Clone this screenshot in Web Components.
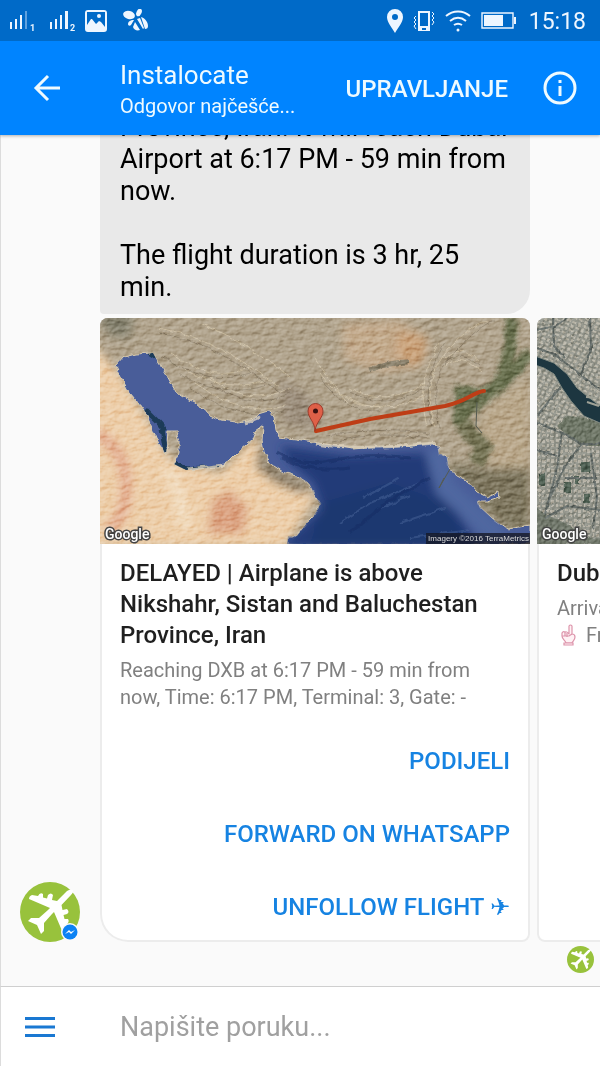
<!DOCTYPE html>
<html lang="hr">
<head>
<meta charset="utf-8">
<meta name="viewport" content="width=device-width, initial-scale=1">
<title>Instalocate</title>
<style>
  html, body { height: 100%; }
  body {
    margin: 0;
    font-family: Roboto, "Noto Sans", sans-serif;
    background: #fafafa;
  }
</style>
</head>
<body>

<chat-app>
  <status-bar slot="header" time="15:18"></status-bar>
  <chat-toolbar slot="header">
    <span slot="title">Instalocate</span>
    <span slot="subtitle">Odgovor najčešće...</span>
    <span slot="action">UPRAVLJANJE</span>
  </chat-toolbar>

  <chat-bubble>Province, Iran. It will reach Dubai Airport at 6:17 PM - 59 min from now.<br><br>The flight duration is 3 hr, 25 min.</chat-bubble>

  <card-carousel>
    <flight-card class="first">
      <route-map slot="media"></route-map>
      <span slot="title">DELAYED | Airplane is above Nikshahr, Sistan and Baluchestan Province, Iran</span>
      <span slot="subtitle">Reaching DXB at 6:17 PM - 59 min from now, Time: 6:17 PM, Terminal: 3, Gate: -</span>
      <card-action slot="actions">PODIJELI</card-action>
      <card-action slot="actions">FORWARD ON WHATSAPP</card-action>
      <card-action slot="actions">UNFOLLOW FLIGHT ✈</card-action>
    </flight-card>
    <flight-card>
      <city-map slot="media"></city-map>
      <span slot="title">Dubai</span>
      <span slot="subtitle">Arrival<br><hand-icon></hand-icon>From</span>
    </flight-card>
    <bot-avatar slot="avatar" badge></bot-avatar>
  </card-carousel>

  <seen-row></seen-row>

  <message-composer slot="footer" hint="Napišite poruku..."></message-composer>
</chat-app>

<template id="chat-app">
  <style>
    :host {
      display: flex;
      flex-direction: column;
      height: 100vh;
      overflow: hidden;
    }
    header { position: relative; z-index: 1; box-shadow: 0 1px 3px rgba(0, 0, 0, .3); }
    main {
      flex: 1;
      min-height: 0;
      overflow: hidden;
      display: flex;
      flex-direction: column;
      justify-content: flex-end;
      background: #fafafa;
      border-left: 1px solid #dcdcdc;
    }
  </style>
  <header><slot name="header"></slot></header>
  <main><slot></slot></main>
  <slot name="footer"></slot>
</template>

<template id="status-bar">
  <style>
    :host {
      display: flex;
      justify-content: space-between;
      align-items: center;
      height: 41px;
      padding: 0 14px 0 10px;
      background: #006ac8;
      color: #eef6ff;
    }
    div { display: flex; align-items: center; gap: 10px; }
    svg { display: block; fill: #eef6ff; }
    text { font-size: 9px; font-weight: 700; }
    time { font-size: 23px; line-height: 28px; padding-top: 2px; }
  </style>
  <div>
    <svg width="30" height="24" viewBox="0 0 30 24">
      <path d="M0 13h2v7H0zM5 10h2v10H5zM10 6h2v14h-2z"/>
      <path d="M15 2h2v18h-2z" opacity=".4"/>
      <text x="20" y="22">1</text>
    </svg>
    <svg width="25" height="24" viewBox="0 0 25 24">
      <path d="M0 13h2v7H0zM5 10h2v10H5zM10 6h2v14h-2zM15 2h3v18h-3z"/>
      <text x="20" y="22">2</text>
    </svg>
    <svg width="22" height="22" viewBox="0 0 22 22">
      <path fill-rule="evenodd" d="M3 0h16a3 3 0 0 1 3 3v16a3 3 0 0 1-3 3H3a3 3 0 0 1-3-3V3a3 3 0 0 1 3-3zM2 2v13l4-6 1 0 4 5 3-3 2 1 4 5V2z"/>
      <circle cx="14" cy="6" r="2"/>
    </svg>
    <svg width="34" height="24" viewBox="0 0 34 24">
      <ellipse cx="12" cy="6" rx="6" ry="4" transform="rotate(14 12 6)"/>
      <ellipse cx="22" cy="3.500" rx="2.500" ry="4" transform="rotate(25 22 3.500)"/>
      <path d="M17 11c-4 0-6 2-6 4s2 2 3 1l3-5z"/>
      <path d="M18 13l5 8c-3 1-6 0-7-3zM20 10l6 10 1-1-4-10zM24 8c4 1 7 5 7 9 0 2-1 3-3 3z"/>
    </svg>
  </div>
  <div>
    <svg width="16" height="24" viewBox="0 0 16 24">
      <path fill-rule="evenodd" d="M8 0a8 8 0 0 1 8 8c0 5-5 11-8 16C5 19 0 13 0 8a8 8 0 0 1 8-8zm0 5a3 3 0 1 0 0 6 3 3 0 0 0 0-6z"/>
    </svg>
    <svg width="22" height="22" viewBox="0 0 22 22">
      <path fill-rule="evenodd" d="M6 1h11v20H5V1zm1 2v13h8V3zm2 15v2h4v-2z"/>
      <path d="M3 6L1 8l2 2-2 2 2 2-2 2 2 3M19 2l2 2-2 2 2 2-2 2 2 2-2 3" fill="none" stroke="#eef6ff"/>
    </svg>
    <svg width="26" height="22" viewBox="0 0 26 22">
      <path d="M1 6c7-6 17-6 24 0M5 11c5-4 11-4 16 0M9 15c3-2 5-2 8 0" fill="none" stroke="#eef6ff" stroke-width="2"/>
      <circle cx="13" cy="20" r="1.5"/>
    </svg>
    <svg width="38" height="18" viewBox="0 0 38 18">
      <path d="M1 1h31v15H1z" fill="none" stroke="#eef6ff" stroke-width="1.4"/>
      <path d="M3 3h19v11H3zM33 5h2v7h-2z"/>
    </svg>
    <time></time>
  </div>
</template>

<template id="chat-toolbar">
  <style>
    :host {
      display: flex;
      align-items: center;
      height: 94px;
      padding: 0 22px 0 20px;
      background: #0084ff;
      color: #eefaff;
    }
    button {
      border: 0;
      padding: 0;
      background: none;
      color: inherit;
      font: 500 24px/32px Roboto, sans-serif;
      cursor: pointer;
    }
    svg { display: block; fill: none; stroke: currentColor; }
    .back { padding: 12px; }
    .names { flex: 1; min-width: 0; padding: 4px 0 0 46px; }
    h1 { margin: 0; font-size: 26px; line-height: 32px; font-weight: 400; }
    p { margin: 0; font-size: 20px; line-height: 30px; }
    .action { padding-top: 2px; }
    .info { margin-left: 34px; }
  </style>
  <button class="back" aria-label="Natrag">
    <svg width="30" height="30" viewBox="0 0 30 30" stroke-width="3"><path d="M28 15H4M16 3L4 15l12 12"/></svg>
  </button>
  <div class="names">
    <h1><slot name="title"></slot></h1>
    <p><slot name="subtitle"></slot></p>
  </div>
  <button class="action"><slot name="action"></slot></button>
  <button class="info" aria-label="Informacije">
    <svg width="36" height="36" viewBox="0 0 36 36" stroke-width="3">
      <circle cx="18" cy="18" r="15"/><path d="M18 16v10M18 10v3"/>
    </svg>
  </button>
</template>

<template id="chat-bubble">
  <style>
    :host {
      display: block;
      flex: none;
      margin: 0 70px 4px 99px;
      padding: 12px 20px 11px;
      border-radius: 24px 24px 24px 4px;
      background: #e9e9e9;
      color: #000;
      font-size: 27px;
      line-height: 32px;
    }
  </style>
  <slot></slot>
</template>

<template id="card-carousel">
  <style>
    :host {
      display: grid;
      grid-template-columns: 99px 1fr;
      flex: none;
      align-items: end;
    }
    .avatar { padding-left: 19px; }
    .track { display: flex; gap: 7px; overflow: hidden; }
    ::slotted(flight-card) { flex: 0 0 calc(100% - 70px); }
  </style>
  <div class="avatar"><slot name="avatar"></slot></div>
  <div class="track"><slot></slot></div>
</template>

<template id="flight-card">
  <style>
    :host {
      display: block;
      box-sizing: border-box;
      overflow: hidden;
      border-radius: 8px;
      background: #fff;
      box-shadow: inset 0 0 0 2px #ececec;
    }
    :host(.first) { border-bottom-left-radius: 28px; }
    .text { padding: 14px 20px 12px; }
    h2 { margin: 0 0 6px; color: #1f1f1f; font-size: 24px; line-height: 31px; font-weight: 500; }
    p { margin: 0; color: #808080; font-size: 20px; line-height: 27px; }
  </style>
  <slot name="media"></slot>
  <div class="text">
    <h2><slot name="title"></slot></h2>
    <p><slot name="subtitle"></slot></p>
  </div>
  <slot name="actions"></slot>
</template>

<template id="card-action">
  <style>
    :host { display: block; }
    button {
      display: block;
      width: 100%;
      border: 0;
      padding: 22px 20px 18px;
      background: none;
      color: #1683e2;
      font: 500 24px/33px Roboto, "DejaVu Sans", sans-serif;
      text-align: right;
      cursor: pointer;
    }
  </style>
  <button><slot></slot></button>
</template>

<template id="route-map">
  <style>
    :host { display: block; position: relative; }
    svg { display: block; width: 100%; height: auto; }
    .logo {
      font: 500 14px Roboto, sans-serif;
      fill: #fff;
      stroke: #444;
      stroke-width: 3px;
      paint-order: stroke;
    }
    small {
      position: absolute;
      right: 0;
      bottom: 0;
      padding: 0 1px 0 2px;
      background: rgba(20, 22, 32, .75);
      color: #ddd;
      font: 8px/11px "Liberation Sans", sans-serif;
    }
  </style>
  <svg viewBox="0 0 430 226" preserveAspectRatio="xMidYMid slice" role="img" aria-label="Google">
    <defs>
      <filter id="relief" x="0" y="0" width="100%" height="100%" color-interpolation-filters="sRGB">
        <feTurbulence type="fractalNoise" baseFrequency=".11 .19" numOctaves="4" seed="8"/>
        <feDiffuseLighting surfaceScale="2" diffuseConstant="1.05" lighting-color="#fff">
          <feDistantLight azimuth="225" elevation="38"/>
        </feDiffuseLighting>
      </filter>
      <filter id="rough" x="-5%" y="-5%" width="110%" height="110%">
        <feTurbulence type="fractalNoise" baseFrequency=".12" numOctaves="3" seed="2"/>
        <feDisplacementMap in="SourceGraphic" scale="5" xChannelSelector="R" yChannelSelector="G"/>
      </filter>
      <filter id="soft" x="-30%" y="-30%" width="160%" height="160%"><feGaussianBlur stdDeviation="5"/></filter>
      <filter id="soft2" x="-30%" y="-30%" width="160%" height="160%"><feGaussianBlur stdDeviation="2"/></filter>
      <clipPath id="sea">
        <path id="coast" d="M16 48L24 39 36 36 53 35 58 44 66 56 76 74 84 79 96 85 109 96 121 102 136 104 149 102 159 96 169 93 174 99 176 111 179 119 196 121 213 124 243 129 253 131 277 129 310 128 333 125 338 128 339 136 347 139 349 151 357 158 367 163 377 174 387 179 398 174 399 179 387 183 378 183 380 189 393 201 407 211 430 207V226H187L188 218 196 219 206 206 213 199 220 186 215 178 209 166 196 158 183 154 171 146 164 134 162 123 163 108 156 113 153 121 139 133 128 144 119 149 103 150 86 152 74 146 79 136 79 123 76 113 68 113 66 136 59 126 54 114 48 99 39 86 29 74 21 59Z"/>
      </clipPath>
    </defs>
    <rect width="430" height="226" fill="#aa9c84"/>
    <g filter="url(#soft)">
      <path d="M-10 24L20 55 50 105 70 140 120 155 155 118 166 140 200 165 215 180 185 230H-10z" fill="#ebcaa3"/>
      <path d="M112 182L130 172 148 190 143 216H108z" fill="#d89b78"/>
      <path d="M-5 115Q25 130 26 165T8 212" fill="none" stroke="#dfa385" stroke-width="11"/>
      <path d="M68 150Q82 180 85 210" fill="none" stroke="#f2ddbf" stroke-width="10"/>
      <path d="M242 6L300 2 330 24 320 48 285 55 244 42z" fill="#bda383"/>
      <path d="M298 14L325 16 326 38 314 50 296 36z" fill="#c49a70"/>
      <path d="M385 90L430 58V150L395 155 375 125z" fill="#b3a082"/>
      <path d="M349 145L385 150 430 150V212L405 210 378 184 355 160z" fill="#746d54"/>
      <path d="M-5 -5H34L30 20 10 18z" fill="#7b7865"/>
      <path d="M160 118L166 140 190 158 212 172 200 176 175 165 156 150z" fill="#82745f"/>
      <path d="M180 60L205 75 225 100 210 112 182 105z" fill="#948673"/>
    </g>
    <g filter="url(#rough)">
      <g filter="url(#soft2)" fill="none" stroke="#5f6644">
        <path d="M412 0L410 30 402 62 388 75M430 35L405 63 385 78 364 92 360 108" stroke-width="12"/>
        <path d="M358 72L385 74 378 88 358 100z" stroke-width="8" fill="#5f6644"/>
        <path d="M362 105L372 118 384 130 375 146" stroke-width="16" stroke="#6c6a4b"/>
      </g>
      <g stroke="#d8caab" fill="none" opacity=".6">
        <path d="M335 110Q320 60 350 30T388 4M327 108Q315 65 340 25M345 40Q360 25 380 44M344 48Q360 34 382 54M250 70Q285 90 325 65M245 78Q285 100 325 78M220 55Q245 90 280 88M215 40Q235 70 250 88M110 60Q150 90 190 70M95 65Q145 100 185 88M85 52Q130 76 165 62M70 34Q110 66 150 50M60 10Q120 22 180 70M100 5Q150 25 190 60"/>
      </g>
      <g stroke="#786b56" fill="none" opacity=".6">
        <path d="M340 110Q326 62 356 32T394 4M332 108Q320 65 345 25M345 44Q360 30 380 49M250 74Q285 94 325 70M220 60Q245 95 280 93M110 65Q150 95 190 75M90 70Q140 105 185 93M80 57Q130 81 165 67M62 38Q110 70 150 55M60 15Q120 27 180 75M225 118Q280 108 330 116M232 124Q280 112 330 120"/>
      </g>
      <path d="M270 52Q290 44 308 44" fill="none" stroke="#837964" stroke-width="5"/>
    </g>
    <rect width="430" height="226" filter="url(#relief)" style="mix-blend-mode:soft-light" opacity=".6"/>
    <g filter="url(#rough)">
      <use href="#coast" fill="#485d99" stroke="#d8cbb0" stroke-width="1"/>
    </g>
    <g clip-path="url(#sea)">
      <g filter="url(#soft)">
        <path d="M180 128L250 138 325 135 332 160 355 190 380 230H180L222 190 214 165 190 145z" fill="#203b78"/>
        <path d="M222 185L290 165 345 185 370 230H210z" fill="#1c376f"/>
        <path d="M336 132L345 170 400 220" fill="none" stroke="#4f67a0" stroke-width="20"/>
      </g>
      <g filter="url(#rough)" fill="none" opacity=".45">
        <path d="M177 134Q200 150 235 142T310 140M182 140Q210 155 250 150" stroke="#142c62" stroke-width="3"/>
        <path d="M240 205L270 185 320 165M252 213L280 190 310 178M263 180L300 160M300 205L345 190M310 220L370 212" stroke="#506a9e" stroke-width="2"/>
        <path d="M250 215L285 185 330 160" stroke="#142c62" stroke-width="3"/>
      </g>
      <path d="M50 35L58 40M46 92L58 104 66 113M62 112L66 134M75 145L88 151 119 149" fill="none" stroke="#1c3b58" stroke-width="5" filter="url(#rough)"/>
    </g>
    <path d="M145 105L160 99M216 126Q260 133 335 125M88 151L125 147" stroke="#ddd2bd" stroke-width="3" fill="none" filter="url(#rough)" opacity=".8"/>
    <path d="M377 84L376 108 382 115M350 151L339 170 344 160" fill="none" stroke="#555b51"/>
    <path d="M216 113L270 101 345 88Q358 85 369 79T384 73" fill="none" stroke="#be3d16" stroke-width="4" stroke-linecap="round"/>
    <path d="M215 113C215 104 208 100 208 93a7.500 7.500 0 0 1 15 0C223 100 216 104 215 113z" fill="#df6048" stroke="#9b3a2a"/>
    <circle cx="215.500" cy="93" r="2.500" fill="#3b1010"/>
    <text class="logo" x="5" y="221">Google</text>
  </svg>
  <small>Imagery ©2016 TerraMetrics</small>
</template>

<template id="city-map">
  <style>
    :host { display: block; }
    svg { display: block; width: 100%; height: auto; }
    .logo {
      font: 500 14px Roboto, sans-serif;
      fill: #fff;
      stroke: #444;
      stroke-width: 3px;
      paint-order: stroke;
    }
  </style>
  <svg viewBox="0 0 430 226" preserveAspectRatio="xMidYMid slice" role="img" aria-label="Google">
    <defs>
      <filter id="grain" x="0" y="0" width="100%" height="100%" color-interpolation-filters="sRGB">
        <feTurbulence type="fractalNoise" baseFrequency=".28" numOctaves="3" seed="5"/>
        <feDiffuseLighting surfaceScale="2" lighting-color="#fff">
          <feDistantLight azimuth="225" elevation="42"/>
        </feDiffuseLighting>
      </filter>
      <filter id="edge" x="0" y="0" width="100%" height="100%">
        <feTurbulence type="fractalNoise" baseFrequency=".2" numOctaves="2"/>
        <feDisplacementMap in="SourceGraphic" scale="3" xChannelSelector="R" yChannelSelector="G"/>
      </filter>
      <pattern id="blocks" width="11" height="9" patternUnits="userSpaceOnUse" patternTransform="rotate(24)">
        <path d="M1 1h3v3H1zM6 1h4v2H6zM1 6h4v2H1zM7 5h3v3H7z" fill="#b5b1a3"/>
      </pattern>
      <pattern id="blocks2" width="9" height="10" patternUnits="userSpaceOnUse">
        <path d="M1 1h3v3H1zM5 2h3v3H5zM1 6h2v3H1zM5 7h3v2H5z" fill="#b0ac9f"/>
      </pattern>
    </defs>
    <rect width="430" height="226" fill="#8a8c82"/>
    <g filter="url(#edge)">
      <rect width="430" height="110" fill="url(#blocks)"/>
      <rect y="110" width="430" height="116" fill="url(#blocks2)"/>
      <path d="M20 108L30 98 50 100 75 110V128H50L35 122z" fill="#687061"/>
      <path d="M8 196L30 206 52 220 430 226H0V190z" fill="#697064"/>
      <path d="M28 164h6v11h-6zM38 158h4v8h-4zM47 176h6v9h-6zM44 144h9v10h-9zM2 156h6v12H2z" fill="#46594c"/>
      <path d="M0 30L17 36 35 50 63 72M16 0L17 28 28 40M53 0L54 32 44 56M0 12L18 8 30 0M0 98L26 66M0 105L28 116 44 126 63 126M25 114L20 150 8 196M44 126L26 152 10 186M54 135L60 180 56 210M8 200L30 188 63 192M0 132L20 138M28 160L60 160" fill="none" stroke="#5a625e" stroke-width="2"/>
    </g>
    <rect width="430" height="226" filter="url(#grain)" style="mix-blend-mode:soft-light" opacity=".5"/>
    <path d="M-2 38L17 45 30 56 40 70 50 78 63 88 110 112V134L63 105 47 98 34 83 25 70 17 56 7 50 -2 47z" fill="#1d3640" stroke="#7f8880"/>
    <path d="M49 79L60 80M50 84L62 88" stroke="#9fa196" stroke-width="2"/>
    <text class="logo" x="5" y="221">Google</text>
  </svg>
</template>

<template id="hand-icon">
  <style>
    :host { display: inline-block; margin: 0 10px 0 4px; vertical-align: -4px; }
    svg { display: block; fill: #fff2f5; stroke: #dd94ab; stroke-width: 1.2; }
  </style>
  <svg width="15" height="22" viewBox="0 0 15 22" aria-hidden="true">
    <path d="M8 10V2q1.500-2 3 0v8q3 0 3 3c0 3-2 4-3 6H5C4 16 1 15 1 12V9q1-2 3-1 2-1 4 2z"/>
    <path d="M3 19h9v2H3zM4 8v4M6 9v4M1 12h7l3-2"/>
  </svg>
</template>

<template id="bot-avatar">
  <style>
    :host { display: block; position: relative; width: 60px; }
    svg { display: block; width: 100%; height: auto; }
    .badge { display: none; }
    :host([badge]) .badge {
      display: block;
      position: absolute;
      right: 1px;
      bottom: 1px;
      width: 18px;
    }
  </style>
  <svg viewBox="0 0 60 60" role="img" aria-label="Instalocate">
    <circle cx="30" cy="30" r="30" fill="#98c23c"/>
    <path fill="#fff" d="M53 8Q50 7 47 9L37 19 32 18 33 13Q31 10 28 13L27 16.500 23 15.500 23 12Q20 10 18 14L12 13Q9 14 9 17L30 26 28 28 19 36 11 36 8 39 17 43 21 52 24 49 24 41 32 32 34 30 43 51Q46 51 47 48L46 43Q50 40 48 37L44.500 37 43.500 33 47 32Q50 30 47 27L42.500 28 41.500 23 51 13Q54 10 53 8z"/>
  </svg>
  <svg class="badge" viewBox="0 0 18 18" aria-hidden="true">
    <circle cx="9" cy="9" r="9" fill="#fafafa"/>
    <circle cx="9" cy="9" r="7.500" fill="#0c82f4"/>
    <path d="M4 11L8 7l2 2 4-2-4 4-2-2z" fill="#fff"/>
  </svg>
</template>

<template id="seen-row">
  <style>
    :host { display: flex; flex: none; justify-content: flex-end; padding: 4px 6px 13px; }
    bot-avatar { width: 27px; }
  </style>
  <bot-avatar></bot-avatar>
</template>

<template id="message-composer">
  <style>
    :host {
      display: flex;
      align-items: center;
      flex: none;
      height: 79px;
      padding: 0 20px 0 24px;
      border-top: 1px solid #cfcfcf;
      border-left: 1px solid #dcdcdc;
      background: #fff;
    }
    button { border: 0; padding: 0; background: none; cursor: pointer; }
    svg { display: block; fill: #1a78d2; }
    input {
      flex: 1;
      min-width: 0;
      margin-left: 65px;
      border: 0;
      padding: 0;
      outline: 0;
      background: none;
      color: #222;
      font: 27px/32px Roboto, sans-serif;
    }
    input::placeholder { color: #a0a0a0; opacity: 1; }
  </style>
  <button aria-label="Izbornik">
    <svg width="30" height="20" viewBox="0 0 30 20"><path d="M0 0h30v3H0zM0 8.500h30v3H0zM0 17h30v3H0z"/></svg>
  </button>
  <input type="text">
</template>

<script>
  class TemplateElement extends HTMLElement {
    constructor() {
      super();
      const t = document.getElementById(this.localName);
      this.attachShadow({mode: 'open'}).appendChild(t.content.cloneNode(true));
    }
  }

  class StatusBar extends TemplateElement {
    connectedCallback() {
      this.shadowRoot.querySelector('time').textContent = this.getAttribute('time');
    }
  }

  class MessageComposer extends TemplateElement {
    connectedCallback() {
      const input = this.shadowRoot.querySelector('input');
      input.placeholder = this.getAttribute('hint');
      input.setAttribute('aria-label', this.getAttribute('hint'));
    }
  }

  class CardAction extends TemplateElement {
    connectedCallback() {
      this.shadowRoot.querySelector('button').addEventListener('click', () => {
        this.dispatchEvent(new CustomEvent('card-action', {
          bubbles: true,
          detail: { label: this.textContent }
        }));
      });
    }
  }

  customElements.define('status-bar', StatusBar);
  customElements.define('message-composer', MessageComposer);
  customElements.define('card-action', CardAction);

  [
    'chat-app', 'chat-toolbar', 'chat-bubble', 'card-carousel', 'flight-card',
    'route-map', 'city-map', 'hand-icon', 'bot-avatar', 'seen-row'
  ].forEach(name => customElements.define(name, class extends TemplateElement {}));
</script>
</body>
</html>
